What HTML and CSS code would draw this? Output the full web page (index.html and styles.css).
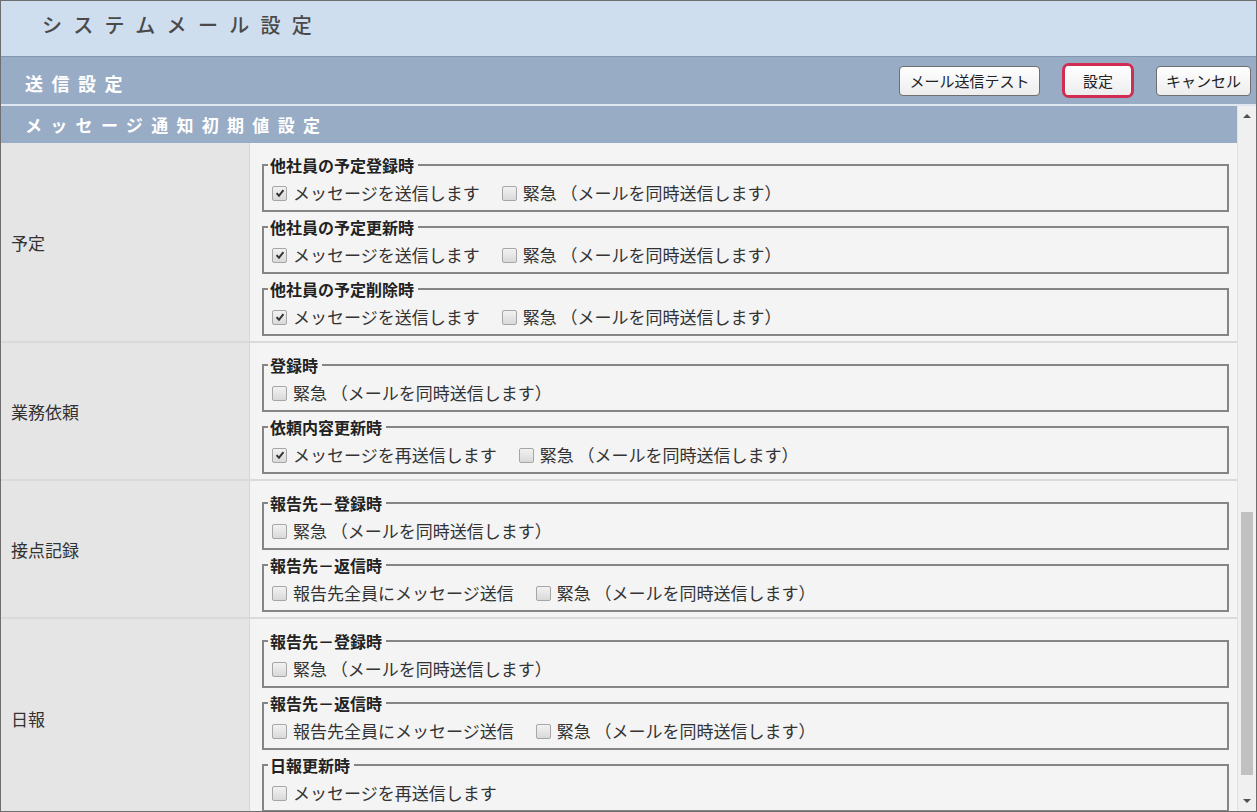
FILE: index.html
```html
<!DOCTYPE html>
<html lang="ja">
<head>
    <meta charset="UTF-8">
    <title>システムメール設定</title>
    <link rel="stylesheet" href="styles.css">
</head>
<body>
    <div class="window">
        <!-- タイトル -->
        <div class="title-bar">システムメール設定</div>

        <!-- 送信設定 -->
        <div class="band band-send">
            <div class="band-title">送信設定</div>
            <div class="btn-row">
                <button type="button" class="btn btn-test">メール送信テスト</button>
                <span class="highlight"><button type="button" class="btn btn-save">設定</button></span>
                <button type="button" class="btn btn-cancel">キャンセル</button>
            </div>
        </div>

        <div class="content">
            <div class="main">
                <div class="band band-sub">
                    <div class="band-title">メッセージ通知初期値設定</div>
                </div>

                <!-- 予定 -->
                <div class="row">
                    <div class="row-label">予定</div>
                    <div class="row-body">
                        <fieldset>
                            <legend>他社員の予定登録時</legend>
                            <label class="opt"><span class="cb checked"><svg viewBox="0 0 14 14"><path d="M3 7.2 L5.8 10.2 L11 3.6"/></svg></span>メッセージを送信します</label>
                            <label class="opt"><span class="cb"></span>緊急 （メールを同時送信します）</label>
                        </fieldset>
                        <fieldset>
                            <legend>他社員の予定更新時</legend>
                            <label class="opt"><span class="cb checked"><svg viewBox="0 0 14 14"><path d="M3 7.2 L5.8 10.2 L11 3.6"/></svg></span>メッセージを送信します</label>
                            <label class="opt"><span class="cb"></span>緊急 （メールを同時送信します）</label>
                        </fieldset>
                        <fieldset>
                            <legend>他社員の予定削除時</legend>
                            <label class="opt"><span class="cb checked"><svg viewBox="0 0 14 14"><path d="M3 7.2 L5.8 10.2 L11 3.6"/></svg></span>メッセージを送信します</label>
                            <label class="opt"><span class="cb"></span>緊急 （メールを同時送信します）</label>
                        </fieldset>
                    </div>
                </div>

                <!-- 業務依頼 -->
                <div class="row">
                    <div class="row-label">業務依頼</div>
                    <div class="row-body">
                        <fieldset>
                            <legend>登録時</legend>
                            <label class="opt"><span class="cb"></span>緊急 （メールを同時送信します）</label>
                        </fieldset>
                        <fieldset>
                            <legend>依頼内容更新時</legend>
                            <label class="opt"><span class="cb checked"><svg viewBox="0 0 14 14"><path d="M3 7.2 L5.8 10.2 L11 3.6"/></svg></span>メッセージを再送信します</label>
                            <label class="opt"><span class="cb"></span>緊急 （メールを同時送信します）</label>
                        </fieldset>
                    </div>
                </div>

                <!-- 接点記録 -->
                <div class="row">
                    <div class="row-label">接点記録</div>
                    <div class="row-body">
                        <fieldset>
                            <legend>報告先－登録時</legend>
                            <label class="opt"><span class="cb"></span>緊急 （メールを同時送信します）</label>
                        </fieldset>
                        <fieldset>
                            <legend>報告先－返信時</legend>
                            <label class="opt"><span class="cb"></span>報告先全員にメッセージ送信</label>
                            <label class="opt"><span class="cb"></span>緊急 （メールを同時送信します）</label>
                        </fieldset>
                    </div>
                </div>

                <!-- 日報 -->
                <div class="row">
                    <div class="row-label">日報</div>
                    <div class="row-body">
                        <fieldset>
                            <legend>報告先－登録時</legend>
                            <label class="opt"><span class="cb"></span>緊急 （メールを同時送信します）</label>
                        </fieldset>
                        <fieldset>
                            <legend>報告先－返信時</legend>
                            <label class="opt"><span class="cb"></span>報告先全員にメッセージ送信</label>
                            <label class="opt"><span class="cb"></span>緊急 （メールを同時送信します）</label>
                        </fieldset>
                        <fieldset>
                            <legend>日報更新時</legend>
                            <label class="opt"><span class="cb"></span>メッセージを再送信します</label>
                        </fieldset>
                    </div>
                </div>
            </div>

            <!-- スクロールバー -->
            <div class="scrollbar">
                <div class="sb-arrow sb-up"></div>
                <div class="sb-track"><div class="sb-thumb"></div></div>
                <div class="sb-arrow sb-down"></div>
            </div>
        </div>
    </div>
</body>
</html>
```

FILE: styles.css
```css
html, body {
    margin: 0;
    padding: 0;
}
body {
    font-family: "Noto Sans CJK JP", "Noto Sans", sans-serif;
    color: #222;
    background: #fff;
}
.window {
    width: 1257px;
    height: 812px;
    box-sizing: border-box;
    border: 1px solid #6e6e6e;
    display: flex;
    flex-direction: column;
    overflow: hidden;
}
.title-bar {
    height: 56px;
    flex: none;
    box-sizing: border-box;
    background-color: #cfdeee;
    border-bottom: 1px solid #8196b0;
    padding: 9px 0 0 41px;
    font-size: 20px;
    line-height: 30px;
    letter-spacing: 11.3px;
    color: #4a4a4a;
    font-weight: 500;
}
.band {
    background-color: #99acc5;
    display: flex;
    align-items: center;
    justify-content: space-between;
    flex: none;
    box-sizing: border-box;
}
.band-send {
    height: 49px;
    padding: 0 5px 0 24px;
    border-bottom: 2px solid #dfe6ef;
}
.band-send .band-title {
    font-size: 18px;
    letter-spacing: 8.5px;
    padding-top: 4px;
}
.band-sub {
    height: 37px;
    padding: 0 0 0 24px;
}
.band-title {
    color: #fff;
    font-weight: bold;
    font-size: 17px;
    letter-spacing: 8.3px;
    line-height: 24px;
}
.btn-row {
    display: flex;
    align-items: center;
    gap: 22px;
}
.btn {
    font-family: "Noto Sans CJK JP", sans-serif;
    font-size: 15px;
    line-height: 20px;
    color: #222;
    height: 30px;
    padding: 0;
    white-space: nowrap;
    background: linear-gradient(#ffffff, #ededed);
    border: 1px solid #6f6f6f;
    border-radius: 4px;
    cursor: pointer;
}
.btn-test {
    width: 141px;
}
.btn-save {
    width: 64px;
    height: 29px;
}
.btn-cancel {
    width: 95px;
}
.highlight {
    display: flex;
    padding: 0 1px;
    border: 3px solid #d12c52;
    border-radius: 7px;
    background: #fff;
}
.highlight .btn {
    border: none;
    border-radius: 2px;
}
.content {
    flex: 1;
    display: flex;
    min-height: 0;
}
.main {
    flex: 1;
    overflow: hidden;
    background: #f4f4f4;
}
.row {
    display: flex;
    border-bottom: 2px solid #dadada;
}
.row-label {
    width: 249px;
    flex: none;
    background-color: #e5e5e5;
    border-right: 1px solid #d6d6d6;
    display: flex;
    align-items: center;
    padding-left: 10px;
    box-sizing: border-box;
    font-size: 17px;
    color: #333;
}
.row-body {
    flex: 1;
    background-color: #f4f4f4;
    padding: 13px 8px 5px 12px;
    display: flex;
    flex-direction: column;
    gap: 6px;
}
fieldset {
    margin: 0;
    padding: 8px 6px 6px 8px;
    border: 2px solid #858585;
    min-width: 0;
    display: flex;
    align-items: center;
    font-size: 17px;
    line-height: 22px;
}
legend {
    font-size: 16px;
    font-weight: bold;
    line-height: 18px;
    color: #222;
    margin-left: -4px;
    padding: 0 4px 0 2px;
}
.opt {
    display: flex;
    align-items: center;
    gap: 6px;
    margin-right: 22px;
    font-size: 17px;
    line-height: 22px;
    height: 22px;
    color: #333;
    white-space: pre;
}
.cb {
    width: 15px;
    height: 15px;
    flex: none;
    box-sizing: border-box;
    border: 1px solid #a6a6a6;
    border-radius: 2px;
    background: linear-gradient(#f2f2f2, #d9d9d9);
    display: inline-flex;
    align-items: center;
    justify-content: center;
}
.cb svg {
    width: 12px;
    height: 12px;
}
.cb svg path {
    fill: none;
    stroke: #333;
    stroke-width: 2.3;
}
.scrollbar {
    width: 18px;
    flex: none;
    background: #f0f0f0;
    border-left: 1px solid #e2e2e2;
    display: flex;
    flex-direction: column;
    align-items: center;
}
.sb-arrow {
    height: 20px;
    width: 100%;
    display: flex;
    align-items: center;
    justify-content: center;
    flex: none;
}
.sb-up::before, .sb-down::before {
    content: "";
    border-left: 4px solid transparent;
    border-right: 4px solid transparent;
}
.sb-up::before {
    border-bottom: 4px solid #505050;
}
.sb-down::before {
    border-top: 4px solid #505050;
}
.sb-track {
    flex: 1;
    width: 100%;
    display: flex;
    justify-content: center;
}
.sb-thumb {
    margin-top: 386px;
    width: 12px;
    height: 263px;
    background: #c1c1c1;
}
```
